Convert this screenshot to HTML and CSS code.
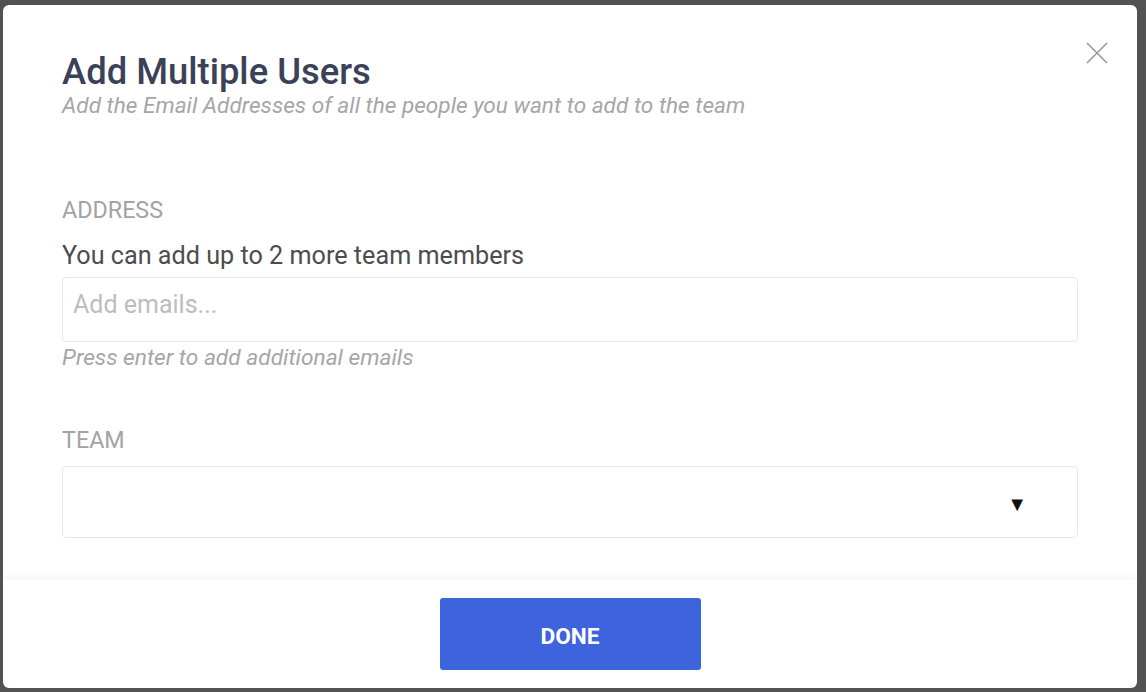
FILE: index.html
```html
<!DOCTYPE html>
<html lang="en">
<head>
  <meta charset="UTF-8">
  <title>Add Multiple Users</title>
  <link rel="stylesheet" href="styles.css">
</head>
<body>
  <div class="modal">
    <button class="close" type="button" aria-label="Close">
      <svg width="22" height="22" viewBox="0 0 22 22"><path d="M1 1 L21 21 M21 1 L1 21" stroke="#9a9a9a" stroke-width="1.6" fill="none"/></svg>
    </button>
    <div class="modal-body">
      <h2>Add Multiple Users</h2>
      <p class="subtitle">Add the Email Addresses of all the people you want to add to the team</p>

      <div class="field">
        <div class="field-label">ADDRESS</div>
        <div class="field-note">You can add up to 2 more team members</div>
        <input type="text" class="text-input" placeholder="Add emails...">
        <div class="field-help">Press enter to add additional emails</div>
      </div>

      <div class="field">
        <div class="field-label">TEAM</div>
        <div class="select-box"><span class="caret">&#9660;</span></div>
      </div>
    </div>
    <div class="modal-footer">
      <button class="done" type="button">DONE</button>
    </div>
  </div>
</body>
</html>
```

FILE: styles.css
```css
body {
  margin: 0;
  background-color: #525252;
  font-family: Roboto, 'Liberation Sans', sans-serif;
  height: 692px;
  overflow: hidden;
}

.modal {
  position: relative;
  margin: 5px 9px 0 3px;
  height: 683px;
  background-color: #fff;
  border-radius: 6px;
  display: flex;
  flex-direction: column;
  overflow: hidden;
}

.close {
  position: absolute;
  top: 37px;
  right: 29px;
  background: none;
  border: none;
  padding: 0;
  cursor: pointer;
}

.modal-body {
  flex: 1;
  padding: 47px 59px 0 59px;
}

h2 {
  margin: 0;
  font-size: 36.4px;
  font-weight: 500;
  color: #3b4157;
  line-height: 40px;
}

.subtitle {
  margin: 0;
  font-size: 22.6px;
  font-style: italic;
  color: #a6a6a6;
  line-height: 28px;
}

.field {
  margin-top: 76px;
}

.field + .field {
  margin-top: 54px;
}

.field-label {
  font-size: 23.3px;
  color: #a3a3a3;
  line-height: 28px;
}

.field-note {
  margin-top: 17px;
  font-size: 25.2px;
  color: #4d4d4d;
  line-height: 30px;
}

.text-input {
  display: block;
  box-sizing: border-box;
  width: 100%;
  height: 65px;
  margin-top: 6px;
  padding: 0 10px 10px;
  border: 1px solid #e8e8e8;
  border-radius: 4px;
  font-family: inherit;
  font-size: 25px;
  color: #444;
}

.text-input::placeholder {
  color: #bdbdbd;
}

.field-help {
  margin-top: 2px;
  font-size: 22.7px;
  font-style: italic;
  color: #a6a6a6;
  line-height: 28px;
}

.select-box {
  box-sizing: border-box;
  height: 72px;
  margin-top: 12px;
  border: 1px solid #e8e8e8;
  border-radius: 4px;
  display: flex;
  align-items: center;
  justify-content: flex-end;
  padding-right: 50px;
}

.caret {
  font-size: 20px;
  color: #111;
  padding-top: 4px;
}

.modal-footer {
  height: 108px;
  box-shadow: 0 -3px 6px rgba(0, 0, 0, 0.04);
  display: flex;
  justify-content: center;
  padding-top: 18px;
  box-sizing: border-box;
}

.done {
  width: 261px;
  height: 72px;
  padding-top: 6px;
  background-color: #3d63dd;
  color: #fff;
  border: none;
  border-radius: 3px;
  font-family: inherit;
  font-size: 22.7px;
  font-weight: 700;
  cursor: pointer;
}
```
